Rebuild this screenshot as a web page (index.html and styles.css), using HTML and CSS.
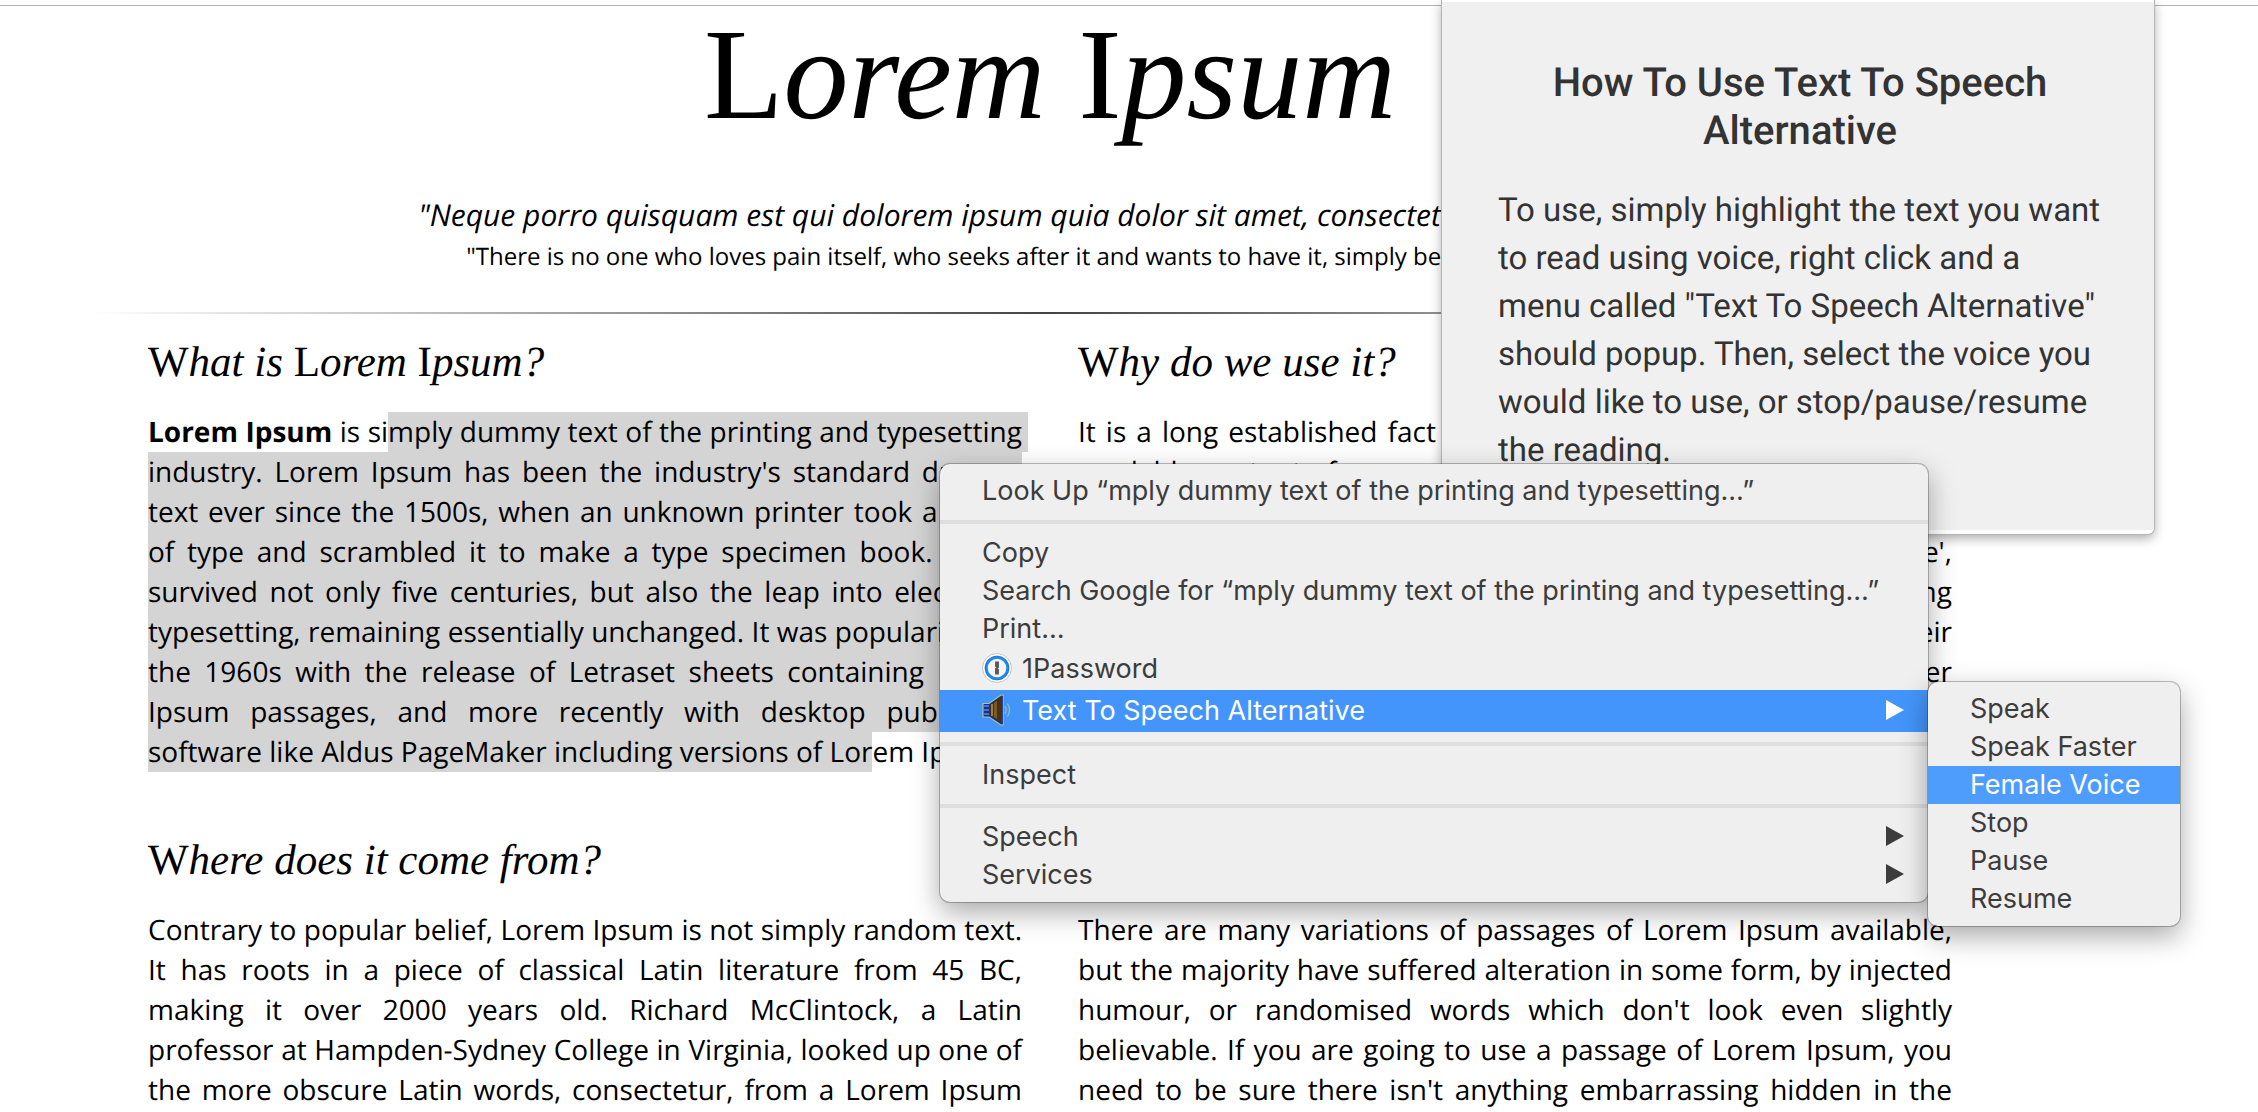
FILE: index.html
```html
<!DOCTYPE html>
<html lang="en">
<head>
    <meta charset="UTF-8">
    <meta name="viewport" content="width=device-width, initial-scale=1.0">
    <title>Lorem Ipsum - All the facts</title>
    <link rel="stylesheet" href="styles.css">
</head>
<body>
    <main class="page">
        <header class="page-header">
            <h1><span class="cap">L</span>orem <span class="cap">I</span>psum</h1>
            <h4>"Neque porro quisquam est qui dolorem ipsum quia dolor sit amet, consectetur, adipisci velit..."</h4>
            <h5>"There is no one who loves pain itself, who seeks after it and wants to have it, simply because it is pain..."</h5>
        </header>
        <hr class="divider">

        <div class="panes">
            <section class="pane">
                <h2><span class="cap">W</span>hat is <span class="cap">L</span>orem <span class="cap">I</span>psum?</h2>
                <p><strong>Lorem Ipsum</strong> is si<mark class="selected line-end">mply dummy text of the printing and typesetting</mark> <mark class="selected">industry. Lorem Ipsum has been the industry's standard dummy text ever since the 1500s, when an unknown printer took a galley of type and scrambled it to make a type specimen book. It has survived not only five centuries, but also the leap into electronic typesetting, remaining essentially unchanged. It was popularised in the 1960s with the release of Letraset sheets containing Lorem Ipsum passages, and more recently with desktop publishing software like Aldus PageMaker including versions of Lor</mark>em Ipsum.</p>
            </section>

            <section class="pane">
                <h2><span class="cap">W</span>hy do we use it?</h2>
                <p>It is a long established fact that a reader will be distracted by the readable content of a page when looking at its layout. The point of using Lorem Ipsum is that it has a more-or-less normal distribution of letters, as opposed to using 'Content here, content here', making it look like readable English. Many desktop publishing packages and web page editors now use Lorem Ipsum as their default model text, and a search for 'lorem ipsum' will uncover many web sites still in their infancy.</p>
            </section>

            <section class="pane">
                <h2><span class="cap">W</span>here does it come from?</h2>
                <p>Contrary to popular belief, Lorem Ipsum is not simply random text. It has roots in a piece of classical Latin literature from 45 BC, making it over 2000 years old. Richard McClintock, a Latin professor at Hampden-Sydney College in Virginia, looked up one of the more obscure Latin words, consectetur, from a Lorem Ipsum passage, and going through the cites of the word in classical literature, discovered the undoubtable source.</p>
            </section>

            <section class="pane">
                <h2><span class="cap">W</span>here can <span class="cap">I</span> get some?</h2>
                <p>There are many variations of passages of Lorem Ipsum available, but the majority have suffered alteration in some form, by injected humour, or randomised words which don't look even slightly believable. If you are going to use a passage of Lorem Ipsum, you need to be sure there isn't anything embarrassing hidden in the middle of text. All the Lorem Ipsum generators on the Internet tend to repeat predefined chunks as necessary.</p>
            </section>
        </div>
    </main>

    <!-- Extension popup -->
    <aside class="popup">
        <div class="popup-body">
            <h3>How To Use Text To Speech Alternative</h3>
            <p>To use, simply highlight the text you want to read using voice, right click and a menu called "Text To Speech Alternative" should popup. Then, select the voice you would like to use, or stop/pause/resume the reading.</p>
        </div>
    </aside>

    <!-- Right click menu -->
    <div class="menu context-menu">
        <button type="button">Look Up “mply dummy text of the printing and typesetting…”</button>
        <hr>
        <button type="button">Copy</button>
        <button type="button">Search Google for “mply dummy text of the printing and typesetting…”</button>
        <button type="button">Print…</button>
        <button type="button" class="with-icon">
            <svg class="icon" viewBox="0 0 30 30" aria-hidden="true">
                <circle cx="15" cy="15" r="14.5" fill="#fff" stroke="#c4c4c4"/>
                <circle cx="15" cy="15" r="10.7" fill="#f4f4f4" stroke="#1a8cf0" stroke-width="2.8"/>
                <circle cx="15" cy="15" r="12" fill="none" stroke="#0e5fb4" stroke-width="0.6"/>
                <path d="M13 8.5h4v6l-1 1 1 1v5h-4v-6l1-1-1-1z" fill="#5c5c5c"/>
            </svg>
            1Password
        </button>
        <button type="button" class="with-icon active">
            <svg class="icon" viewBox="0 0 30 32" aria-hidden="true">
                <path d="M1 9.5h6L19 1h2v30h-2L7 23H1z" fill="#15309a" stroke="#a9c98c" stroke-width="1.2"/>
                <path d="M8 11l11-8v26L8 21z" fill="#49310f"/>
                <path d="M12 9l3-2v18l-3-2z" fill="#7a5a20"/>
                <path d="M10 10v12" stroke="#d6cf9a" stroke-width="1"/>
                <path d="M2 12h5M2 16h5M2 20h5" stroke="#86b4ef" stroke-width="1.2"/>
                <path d="M20 2v28" stroke="#1733a8" stroke-width="1.6"/>
                <path d="M23 12q2 4 0 8M25.5 9.5q4 6.5 0 13" fill="none" stroke="#8cc6a4" stroke-width="1.2"/>
            </svg>
            Text To Speech Alternative
            <span class="arrow"></span>
        </button>
        <hr>
        <button type="button">Inspect</button>
        <hr>
        <button type="button">Speech <span class="arrow"></span></button>
        <button type="button">Services <span class="arrow"></span></button>
    </div>

    <div class="menu sub-menu">
        <button type="button">Speak</button>
        <button type="button">Speak Faster</button>
        <button type="button" class="active">Female Voice</button>
        <button type="button">Stop</button>
        <button type="button">Pause</button>
        <button type="button">Resume</button>
    </div>
</body>
</html>
```
FILE: styles.css
```css
html {
    overflow: hidden;
}

body {
    position: relative;
    margin: 0;
    padding: 5px 158px 0 0;
    background-color: #fff;
    color: #000;
    font-family: "Open Sans", Arial, sans-serif;
    font-size: 28px;
    line-height: 40px;
    text-rendering: geometricPrecision;
}

/* thin line under the browser toolbar */
body::before {
    content: "";
    display: block;
    height: 1px;
    margin-right: -158px;
    background-color: #b2b2b2;
}

.page {
    max-width: 1920px;
    margin: 0 auto;
}

.page-header {
    text-align: center;
}

h1, h2, h4, h5 {
    margin: 0;
    font-weight: normal;
}

h1, h2 {
    font-family: "Liberation Serif", "Times New Roman", serif;
    font-style: italic;
}

h1 {
    font-size: 130px;
    line-height: 138px;
}

.cap {
    font-style: normal;
}

h4 {
    margin-top: 51px;
    font-size: 30px;
    font-style: italic;
}

h5 {
    margin-top: 2px;
    font-size: 24px;
}

.divider {
    height: 2px;
    margin: 35px 0 0;
    border: none;
    background: linear-gradient(to right, transparent, #444, transparent);
}

.panes {
    display: grid;
    grid-template-columns: 1fr 1fr;
    column-gap: 56px;
    row-gap: 60px;
    padding: 20px 58px 0;
}

.pane h2 {
    margin-bottom: 20px;
    font-size: 43px;
    line-height: 58px;
}

.pane p {
    margin: 0;
    text-align: justify;
}

.selected {
    padding: 1px 0;
    background-color: #d4d4d4;
    color: inherit;
}

.line-end {
    box-shadow: 6px 0 0 #d4d4d4;
}

/* Extension popup */
.popup {
    position: absolute;
    top: 0;
    right: 104px;
    box-sizing: border-box;
    width: 712px;
    padding: 2px 0 4px;
    border-radius: 0 0 6px 6px;
    background-color: #fff;
    box-shadow: 0 0 0 1px #b4b4b4, 0 4px 12px rgba(0, 0, 0, 0.35);
    color: #333;
    font-family: Roboto, Arial, sans-serif;
}

.popup-body {
    padding: 57px 52px 55px 56px;
    background-color: #f0f0f0;
}

.popup h3 {
    margin: 0 0 32px;
    font-size: 40px;
    font-weight: 500;
    line-height: 48px;
    text-align: center;
}

.popup p {
    margin: 0;
    font-size: 33px;
    line-height: 48px;
}

/* Menus */
.menu {
    position: absolute;
    display: flex;
    flex-direction: column;
    padding: 8px 0;
    border-radius: 10px;
    background-color: #efefef;
    box-shadow: 0 0 0 1px rgba(0, 0, 0, 0.25), 0 10px 28px rgba(0, 0, 0, 0.35);
}

.context-menu {
    top: 464px;
    left: 940px;
    width: 988px;
}

.sub-menu {
    top: 682px;
    left: 1928px;
    width: 252px;
}

.menu button {
    display: flex;
    align-items: center;
    height: 38px;
    padding: 0 24px 2px 42px;
    border: none;
    background: none;
    color: #3c3c3c;
    font-family: Inter, Roboto, Arial, sans-serif;
    font-size: 27px;
    white-space: nowrap;
}

.menu .with-icon {
    gap: 10px;
    height: 42px;
}

.menu .active {
    background-color: #4395fb;
    color: #fff;
}

.sub-menu .active {
    background-color: #4e9cfb;
}

.menu hr {
    width: 100%;
    height: 4px;
    margin: 10px 0;
    border: none;
    background-color: #dedede;
}

.icon {
    width: 30px;
    height: 32px;
}

.arrow {
    margin-left: auto;
    border-left: 18px solid currentColor;
    border-top: 10px solid transparent;
    border-bottom: 10px solid transparent;
}
```
